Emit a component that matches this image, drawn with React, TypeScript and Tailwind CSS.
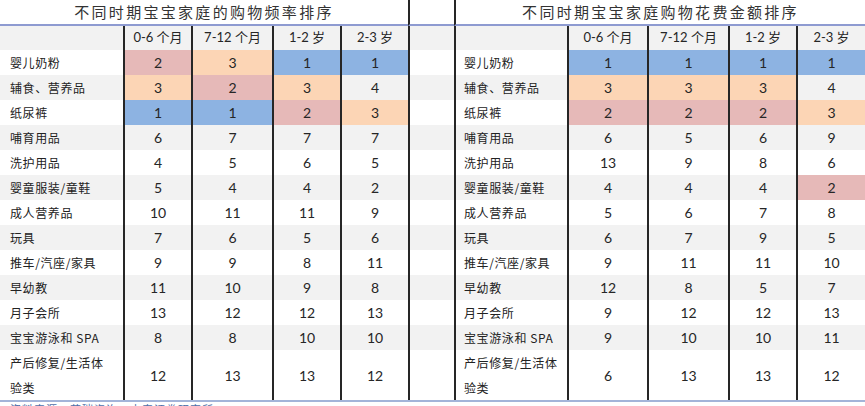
import React from "react";

type Color = "" | "p" | "o" | "b";
type Row = { label: string; vals: number[]; cols: Color[] };

const left: Row[] = [
  { label: "婴儿奶粉", vals: [2, 3, 1, 1], cols: ["p", "o", "b", "b"] },
  { label: "辅食、营养品", vals: [3, 2, 3, 4], cols: ["o", "p", "o", ""] },
  { label: "纸尿裤", vals: [1, 1, 2, 3], cols: ["b", "b", "p", "o"] },
  { label: "哺育用品", vals: [6, 7, 7, 7], cols: ["", "", "", ""] },
  { label: "洗护用品", vals: [4, 5, 6, 5], cols: ["", "", "", ""] },
  { label: "婴童服装/童鞋", vals: [5, 4, 4, 2], cols: ["", "", "", ""] },
  { label: "成人营养品", vals: [10, 11, 11, 9], cols: ["", "", "", ""] },
  { label: "玩具", vals: [7, 6, 5, 6], cols: ["", "", "", ""] },
  { label: "推车/汽座/家具", vals: [9, 9, 8, 11], cols: ["", "", "", ""] },
  { label: "早幼教", vals: [11, 10, 9, 8], cols: ["", "", "", ""] },
  { label: "月子会所", vals: [13, 12, 12, 13], cols: ["", "", "", ""] },
  { label: "宝宝游泳和 SPA", vals: [8, 8, 10, 10], cols: ["", "", "", ""] },
  { label: "产后修复/生活体验类", vals: [12, 13, 13, 12], cols: ["", "", "", ""] },
];

const right: Row[] = [
  { label: "婴儿奶粉", vals: [1, 1, 1, 1], cols: ["b", "b", "b", "b"] },
  { label: "辅食、营养品", vals: [3, 3, 3, 4], cols: ["o", "o", "o", ""] },
  { label: "纸尿裤", vals: [2, 2, 2, 3], cols: ["p", "p", "p", "o"] },
  { label: "哺育用品", vals: [6, 5, 6, 9], cols: ["", "", "", ""] },
  { label: "洗护用品", vals: [13, 9, 8, 6], cols: ["", "", "", ""] },
  { label: "婴童服装/童鞋", vals: [4, 4, 4, 2], cols: ["", "", "", "p"] },
  { label: "成人营养品", vals: [5, 6, 7, 8], cols: ["", "", "", ""] },
  { label: "玩具", vals: [6, 7, 9, 5], cols: ["", "", "", ""] },
  { label: "推车/汽座/家具", vals: [9, 11, 11, 10], cols: ["", "", "", ""] },
  { label: "早幼教", vals: [12, 8, 5, 7], cols: ["", "", "", ""] },
  { label: "月子会所", vals: [9, 12, 12, 13], cols: ["", "", "", ""] },
  { label: "宝宝游泳和 SPA", vals: [9, 10, 10, 11], cols: ["", "", "", ""] },
  { label: "产后修复/生活体验类", vals: [6, 13, 13, 12], cols: ["", "", "", ""] },
];

const headers = ["0-6 个月", "7-12 个月", "1-2 岁", "2-3 岁"];

const cjk = { fontFamily: '"Noto Sans CJK SC", "Noto Sans", sans-serif' };
const num = { fontFamily: 'Lato, "Noto Sans CJK SC", sans-serif' };

function bgFor(c: Color, stripe: boolean) {
  if (c === "p") return "bg-[#e6b9b8]";
  if (c === "o") return "bg-[#fcd5b5]";
  if (c === "b") return "bg-[#8db3e2]";
  return stripe ? "bg-[#f2f2f2]" : "bg-white";
}

function Label({ text, stripe, last, indent }: { text: string; stripe: boolean; last: boolean; indent: string }) {
  if (last) {
    return (
      <div
        className={`${indent} ${stripe ? "bg-[#f2f2f2]" : "bg-white"} flex flex-col justify-center text-[12px] tracking-[0.6px] text-[#222] leading-[25px]`}
        style={cjk}
      >
        <span>产后修复/生活体</span>
        <span>验类</span>
      </div>
    );
  }
  return (
    <div
      className={`${indent} ${stripe ? "bg-[#f2f2f2]" : "bg-white"} flex items-center text-[12px] tracking-[0.6px] text-[#222] whitespace-nowrap`}
      style={cjk}
    >
      {text}
    </div>
  );
}

function Cell({ v, c, stripe }: { v: number; c: Color; stripe: boolean }) {
  return (
    <div
      className={`${bgFor(c, stripe)} border-l-2 border-[#262626] flex items-center justify-center text-[14px] text-[#262626]`}
      style={num}
    >
      {v}
    </div>
  );
}

export default function App() {
  return (
    <div className="w-[865px] h-[406px] overflow-hidden bg-white">
      <div className="grid grid-cols-[123px_68px_81px_68px_68px_46px_113px_80px_81px_68px_69px] grid-rows-[26px_24px_repeat(12,25px)_50px]">
        {/* title row */}
        <div
          className="col-span-5 border-b-2 border-[#8e9bd1] flex items-center justify-center text-[15px] tracking-[2.3px] text-[#333]"
          style={cjk}
        >
          不同时期宝宝家庭的购物频率排序
        </div>
        <div className="border-l-2 border-b-2 border-l-[#262626] border-b-[#8e9bd1]" />
        <div
          className="col-span-5 border-l-2 border-b-2 border-l-[#262626] border-b-[#8e9bd1] flex items-center justify-center text-[15px] tracking-[2.3px] text-[#333]"
          style={cjk}
        >
          不同时期宝宝家庭购物花费金额排序
        </div>

        {/* header row */}
        <div className="bg-[#f2f2f2]" />
        {headers.map((h) => (
          <div
            key={"l" + h}
            className="bg-[#f2f2f2] border-l-2 border-[#262626] flex items-center justify-center text-[13px] text-[#262626]"
            style={num}
          >
            {h}
          </div>
        ))}
        <div className="bg-[#f2f2f2] border-l-2 border-[#262626]" />
        <div className="bg-[#f2f2f2] border-l-2 border-[#262626]" />
        {headers.map((h) => (
          <div
            key={"r" + h}
            className="bg-[#f2f2f2] border-l-2 border-[#262626] flex items-center justify-center text-[13px] text-[#262626]"
            style={num}
          >
            {h}
          </div>
        ))}

        {/* data rows */}
        {left.map((row, i) => {
          const stripe = i % 2 === 1;
          const last = i === left.length - 1;
          const r = right[i];
          return (
            <React.Fragment key={row.label}>
              <Label text={row.label} stripe={stripe} last={last} indent="pl-[10px]" />
              {row.vals.map((v, j) => (
                <Cell key={"l" + j} v={v} c={row.cols[j]} stripe={stripe} />
              ))}
              <div className={`${stripe ? "bg-[#f2f2f2]" : "bg-white"} border-l-2 border-[#262626]`} />
              <div className="border-l-2 border-[#262626] flex">
                <div className="flex-1 flex">
                  <Label text={r.label} stripe={stripe} last={last} indent="pl-[8px] flex-1" />
                </div>
              </div>
              {r.vals.map((v, j) => (
                <Cell key={"r" + j} v={v} c={r.cols[j]} stripe={stripe} />
              ))}
            </React.Fragment>
          );
        })}
      </div>
      <div className="border-t-2 border-[#a3b4d9]" />
      <div className="pl-[10px] text-[11px] leading-[14px] text-[#4f6fa8] tracking-[1px] whitespace-nowrap" style={cjk}>
        资料来源：艾瑞咨询，中泰证券研究所
      </div>
    </div>
  );
}
